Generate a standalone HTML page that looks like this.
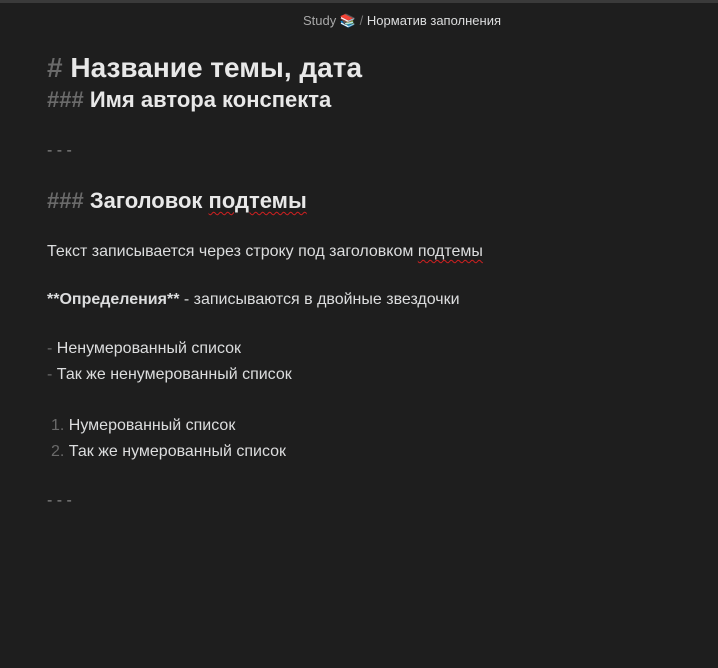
<!DOCTYPE html>
<html><head><meta charset="utf-8"><style>
body{margin:0;width:718px;height:668px;background:#1e1e1e;overflow:hidden;font-family:"Liberation Sans",sans-serif;color:#dcddde;position:relative}
.top{position:absolute;left:0;top:0;width:718px;height:3px;background:#3a3a3a}
.l{position:absolute;left:47px;white-space:nowrap;line-height:1}
.m{color:#6a6a6a}
.t{font-size:16px}
.sq{text-decoration:underline wavy #d02020;text-decoration-thickness:1px;text-underline-offset:3px}
</style></head><body>
<div class="top"></div>
<div class="l" style="left:303px;top:14px;font-size:13px;color:#a8a8a8">Study 📚 <span style="color:#777">/</span> <span style="color:#dcddde">Норматив заполнения</span></div>
<div class="l" style="top:54px;font-size:28px;font-weight:bold;color:#e8e8e8"><span class="m">#</span> Название темы, дата</div>
<div class="l" style="top:89px;font-size:22px;font-weight:bold;color:#e8e8e8"><span class="m">###</span> Имя автора конспекта</div>
<div class="l t m" style="top:143px;color:#888">- - -</div>
<div class="l" style="top:190px;font-size:22px;font-weight:bold;color:#e8e8e8"><span class="m">###</span> Заголовок <span class="sq">подтемы</span></div>
<div class="l t" style="top:244px">Текст записывается через строку под заголовком <span class="sq">подтемы</span></div>
<div class="l t" style="top:292px"><b>**Определения**</b> - записываются в двойные звездочки</div>
<div class="l t" style="top:341px"><span class="m">-</span> Ненумерованный список</div>
<div class="l t" style="top:367px"><span class="m">-</span> Так же ненумерованный список</div>
<div class="l t" style="top:418px;left:51px"><span class="m">1.</span> Нумерованный список</div>
<div class="l t" style="top:444px;left:51px"><span class="m">2.</span> Так же нумерованный список</div>
<div class="l t" style="top:493px;color:#888">- - -</div>
</body></html>
